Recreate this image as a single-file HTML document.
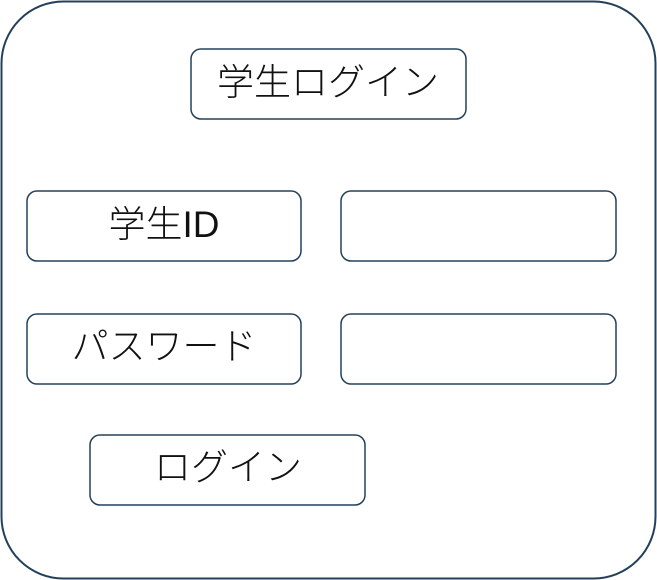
<!DOCTYPE html>
<html><head><meta charset="utf-8"><style>
html,body{margin:0;padding:0;background:#fff;width:657px;height:580px;overflow:hidden}
text{font-family:"Liberation Sans","Noto Sans CJK JP",sans-serif;font-size:37px;fill:#111;font-weight:300}
</style></head><body>
<svg width="657" height="580" xmlns="http://www.w3.org/2000/svg">
<g fill="#fff" stroke="#23405a" stroke-width="1.5">
<rect x="1.5" y="1.5" width="654" height="577" rx="62" stroke-width="2"/>
<rect x="191" y="49" width="275" height="70" rx="10"/>
<rect x="27" y="191" width="274" height="70" rx="10"/>
<rect x="341" y="191" width="275" height="70" rx="10"/>
<rect x="27" y="314" width="274" height="70" rx="10"/>
<rect x="341" y="314" width="275" height="70" rx="10"/>
<rect x="90" y="435" width="275" height="70" rx="10"/>
</g>
<g text-anchor="middle">
<text x="328" y="95">学生ログイン</text>
<text x="164" y="237">学生ID</text>
<text x="164" y="359">パスワード</text>
<text x="228" y="480">ログイン</text>
</g>
</svg>
</body></html>
